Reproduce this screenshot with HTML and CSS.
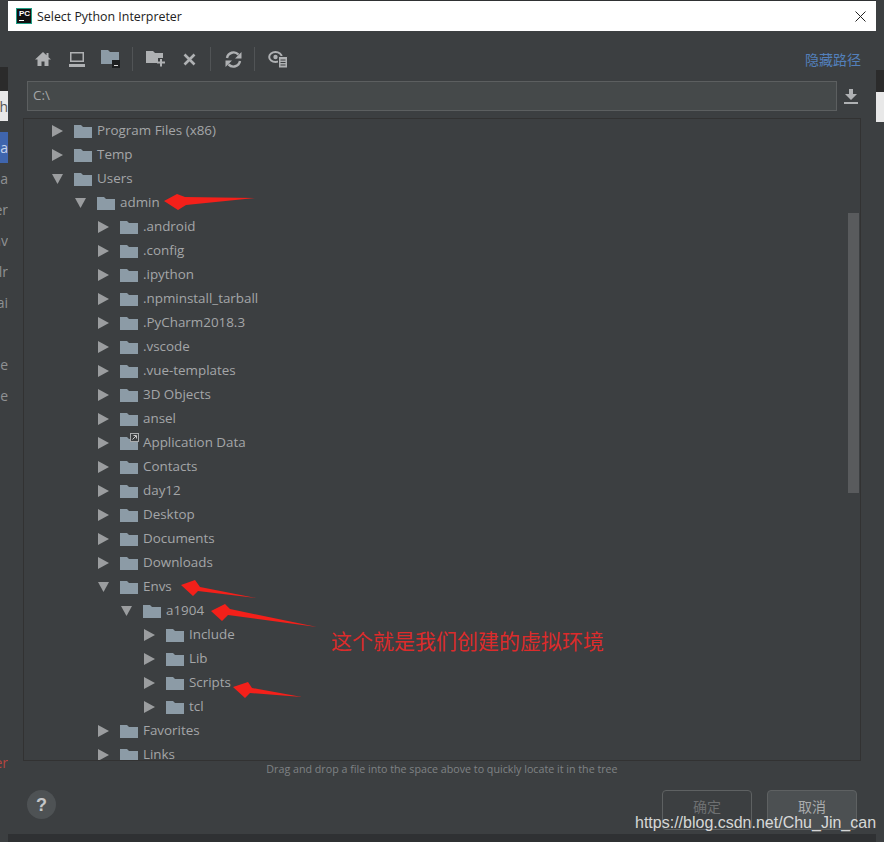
FILE: index.html
```html
<!DOCTYPE html>
<html lang="zh">
<head>
    <meta charset="UTF-8">
    <meta name="viewport" content="width=device-width, initial-scale=1.0">
    <title>Select Python Interpreter</title>
    <link rel="stylesheet" href="styles.css">
</head>
<body>

    <svg class="defs" width="0" height="0">
        <symbol id="arrow-right" viewBox="0 0 11 12"><path d="M0 0 L11 6 L0 12 Z"/></symbol>
        <symbol id="arrow-down" viewBox="0 0 11 12"><path d="M0 1 H11 L5.5 11 Z"/></symbol>
        <symbol id="folder" viewBox="0 0 18 14"><path d="M0 1 H7 L9 3 H18 V14 H0 Z"/></symbol>
    </svg>

    <!-- ventana de atras, solo se ve un trozo -->
    <div class="strip strip-left">
        <div class="s-dark" style="height:67px"></div>
        <div class="s-black" style="height:24px"></div>
        <div class="s-white"><span>h</span></div>
        <div class="s-blue"><span>a</span></div>
        <div class="s-row"><span>da</span></div>
        <div class="s-row"><span>er</span></div>
        <div class="s-row"><span>nv</span></div>
        <div class="s-row"><span>lr</span></div>
        <div class="s-row"><span>ai</span></div>
        <div class="s-row"></div>
        <div class="s-row"><span>xe</span></div>
        <div class="s-row"><span>xe</span></div>
        <div class="s-fill"></div>
        <div class="s-row s-red"><span>er</span></div>
        <div class="s-dark" style="height:64px"></div>
    </div>

    <div class="dialog">
        <div class="titlebar">
            <div class="pc-logo"><span>PC</span><i></i></div>
            <div class="title">Select Python Interpreter</div>
            <svg class="close" width="11" height="11" viewBox="0 0 11 11"><path d="M0.5 0.5 L10.5 10.5 M10.5 0.5 L0.5 10.5" stroke="#222" fill="none"/></svg>
        </div>

        <div class="toolbar">
            <div class="tool"><svg width="18" height="16" viewBox="0 0 18 16"><path d="M9 1 L1 8.5 H3.5 V15 H7.5 V10.5 H10.5 V15 H14.5 V8.5 H17 L14.5 6.2 V2 H12.5 V4.3 Z"/></svg></div>
            <div class="tool"><svg width="16" height="15" viewBox="0 0 16 15"><path fill-rule="evenodd" d="M1 0 H15 V10 H1 Z M2.500 1.500 V8.500 H13.500 V1.500 Z M0 12 H16 V15 H0 Z"/></svg></div>
            <div class="tool"><svg width="20" height="18" viewBox="0 0 20 18"><path class="blue-f" d="M0 0 H7 L9 2 H18 V14 H0 Z"/><rect x="11" y="10" width="8" height="8" fill="#1d1f20"/><rect x="13" y="15" width="4" height="1" fill="#ddd"/></svg></div>
            <div class="sep sep1"></div>
            <div class="tool"><svg width="20" height="16" viewBox="0 0 20 16"><path d="M0 0 H7 L9 2 H17 V7 H12 V12 H0 Z"/><path d="M14 8 H16 V10.500 H19 V12.500 H16 V15.500 H14 V12.500 H11 V10.500 H14 Z"/></svg></div>
            <div class="tool tool-x"><svg width="13" height="13" viewBox="0 0 13 13"><path d="M1.500 1.500 L11.500 11.500 M11.500 1.500 L1.500 11.500" stroke="#afb1b3" stroke-width="2.600" fill="none"/></svg></div>
            <div class="sep sep2"></div>
            <div class="tool"><svg width="17" height="17" viewBox="0 0 17 17"><path d="M2 7 A6.700 6.700 0 0 1 13.500 3.600" stroke="#afb1b3" stroke-width="2.400" fill="none"/><path d="M15 10 A6.700 6.700 0 0 1 3.500 13.400" stroke="#afb1b3" stroke-width="2.400" fill="none"/><path d="M16.500 1 V7.500 H10 Z M0.500 16 V9.500 H7 Z"/></svg></div>
            <div class="sep sep3"></div>
            <div class="tool"><svg width="20" height="19" viewBox="0 0 20 19"><ellipse cx="7.500" cy="7" rx="6.300" ry="5" fill="none" stroke="#afb1b3" stroke-width="2"/><circle cx="7.500" cy="7" r="2.200"/><path d="M10.500 6.500 H19.500 V18 H10.500 Z" stroke="#3c3f41"/><path d="M12.500 10 H17.500 M12.500 12.500 H17.500 M12.500 15 H17.500" stroke="#3c3f41" fill="none"/></svg></div>
            <a class="hide-path">隐藏路径</a>
        </div>

        <div class="path-row">
            <div class="path-input">C:\</div>
            <svg class="download" width="16" height="15" viewBox="0 0 16 15"><path d="M6 0 H10 V5 H14 L8 11 L2 5 H6 Z M1 13 H15 V15 H1 Z"/></svg>
        </div>

        <div class="tree">
            <div class="row lv0"><svg class="arr"><use href="#arrow-right"/></svg><svg class="fld"><use href="#folder"/></svg><span>Program Files (x86)</span></div>
            <div class="row lv0"><svg class="arr"><use href="#arrow-right"/></svg><svg class="fld"><use href="#folder"/></svg><span>Temp</span></div>
            <div class="row lv0"><svg class="arr"><use href="#arrow-down"/></svg><svg class="fld"><use href="#folder"/></svg><span>Users</span></div>
            <div class="row lv1"><svg class="arr"><use href="#arrow-down"/></svg><svg class="fld"><use href="#folder"/></svg><span>admin</span></div>
            <div class="row lv2"><svg class="arr"><use href="#arrow-right"/></svg><svg class="fld"><use href="#folder"/></svg><span>.android</span></div>
            <div class="row lv2"><svg class="arr"><use href="#arrow-right"/></svg><svg class="fld"><use href="#folder"/></svg><span>.config</span></div>
            <div class="row lv2"><svg class="arr"><use href="#arrow-right"/></svg><svg class="fld"><use href="#folder"/></svg><span>.ipython</span></div>
            <div class="row lv2"><svg class="arr"><use href="#arrow-right"/></svg><svg class="fld"><use href="#folder"/></svg><span>.npminstall_tarball</span></div>
            <div class="row lv2"><svg class="arr"><use href="#arrow-right"/></svg><svg class="fld"><use href="#folder"/></svg><span>.PyCharm2018.3</span></div>
            <div class="row lv2"><svg class="arr"><use href="#arrow-right"/></svg><svg class="fld"><use href="#folder"/></svg><span>.vscode</span></div>
            <div class="row lv2"><svg class="arr"><use href="#arrow-right"/></svg><svg class="fld"><use href="#folder"/></svg><span>.vue-templates</span></div>
            <div class="row lv2"><svg class="arr"><use href="#arrow-right"/></svg><svg class="fld"><use href="#folder"/></svg><span>3D Objects</span></div>
            <div class="row lv2"><svg class="arr"><use href="#arrow-right"/></svg><svg class="fld"><use href="#folder"/></svg><span>ansel</span></div>
            <div class="row lv2"><svg class="arr"><use href="#arrow-right"/></svg><div class="fld-wrap"><svg class="fld"><use href="#folder"/></svg><svg class="link-badge" width="9" height="9" viewBox="0 0 9 9"><rect width="9" height="9" fill="#3c3f41"/><rect x="0.500" y="0.500" width="8" height="8" fill="none" stroke="#a9abad"/><path d="M2.500 6.500 L6 3 M3.500 2.500 H6.500 V5.500" stroke="#c8c8c8" fill="none"/></svg></div><span>Application Data</span></div>
            <div class="row lv2"><svg class="arr"><use href="#arrow-right"/></svg><svg class="fld"><use href="#folder"/></svg><span>Contacts</span></div>
            <div class="row lv2"><svg class="arr"><use href="#arrow-right"/></svg><svg class="fld"><use href="#folder"/></svg><span>day12</span></div>
            <div class="row lv2"><svg class="arr"><use href="#arrow-right"/></svg><svg class="fld"><use href="#folder"/></svg><span>Desktop</span></div>
            <div class="row lv2"><svg class="arr"><use href="#arrow-right"/></svg><svg class="fld"><use href="#folder"/></svg><span>Documents</span></div>
            <div class="row lv2"><svg class="arr"><use href="#arrow-right"/></svg><svg class="fld"><use href="#folder"/></svg><span>Downloads</span></div>
            <div class="row lv2"><svg class="arr"><use href="#arrow-down"/></svg><svg class="fld"><use href="#folder"/></svg><span>Envs</span></div>
            <div class="row lv3"><svg class="arr"><use href="#arrow-down"/></svg><svg class="fld"><use href="#folder"/></svg><span>a1904</span></div>
            <div class="row lv4"><svg class="arr"><use href="#arrow-right"/></svg><svg class="fld"><use href="#folder"/></svg><span>Include</span></div>
            <div class="row lv4"><svg class="arr"><use href="#arrow-right"/></svg><svg class="fld"><use href="#folder"/></svg><span>Lib</span></div>
            <div class="row lv4"><svg class="arr"><use href="#arrow-right"/></svg><svg class="fld"><use href="#folder"/></svg><span>Scripts</span></div>
            <div class="row lv4"><svg class="arr"><use href="#arrow-right"/></svg><svg class="fld"><use href="#folder"/></svg><span>tcl</span></div>
            <div class="row lv2"><svg class="arr"><use href="#arrow-right"/></svg><svg class="fld"><use href="#folder"/></svg><span>Favorites</span></div>
            <div class="row lv2"><svg class="arr"><use href="#arrow-right"/></svg><svg class="fld"><use href="#folder"/></svg><span>Links</span></div>
            <div class="scroll-thumb"></div>
        </div>

        <div class="hint">Drag and drop a file into the space above to quickly locate it in the tree</div>

        <div class="footer">
            <div class="help">?</div>
            <div class="btn btn-off">确定</div>
            <div class="btn">取消</div>
        </div>
    </div>

    <div class="strip strip-right">
        <div class="s-dark" style="height:70px"></div>
        <div class="s-black" style="height:22px"></div>
        <div class="s-white"></div>
        <div class="s-fill"></div>
    </div>

    <!-- anotaciones pintadas encima de la captura -->
    <svg class="marks" width="884" height="842" viewBox="0 0 884 842">
        <path d="M164 201 L177 194 L185 197 L255 198 L186 205 L178 210 Z"/>
        <path d="M181 585 L195 580 L200 587 L256 598 L198 591 L193 596 Z"/>
        <path d="M211 611 L225 604 L230 609 L317 627 L228 615 L222 621 Z"/>
        <path d="M233 687 L248 682 L252 688 L302 697 L250 693 L245 698 Z"/>
    </svg>
    <div class="note">这个就是我们创建的虚拟环境</div>
    <div class="watermark">https://blog.csdn.net/Chu_Jin_can</div>

</body>
</html>
```

FILE: styles.css
```css
/* Global */
body {
    font-family: 'Open Sans', sans-serif;
    margin: 0;
    padding: 0;
    width: 884px;
    height: 842px;
    overflow: hidden;
    background-color: #2f3133;
    display: flex;
    position: relative;
}

.defs {
    position: absolute;
}

/* Ventana de atras */
.strip {
    width: 8px;
    height: 842px;
    flex: none;
    display: flex;
    flex-direction: column;
    overflow: hidden;
    background-color: #3c3f41;
    font-size: 14px;
    color: #8f9193;
}

.strip > div {
    display: flex;
    justify-content: flex-end;
    align-items: center;
    white-space: nowrap;
    flex: none;
}

.s-dark {
    background-color: #3c3f41;
}

.s-black {
    background-color: #2b2b2b;
}

.s-white {
    height: 30px;
    background-color: #e8e8e8;
    color: #555;
    margin-bottom: 11px;
}

.s-blue {
    height: 31px;
    background-color: #3f65ad;
    color: #c5d2ea;
}

.s-row {
    height: 31px;
}

.strip > .s-fill {
    flex: 1;
}

.s-red {
    color: #b5453f;
}

/* Dialogo */
.dialog {
    width: 868px;
    height: 833px;
    margin-top: 1px;
    flex: none;
    background-color: #3c3f41;
    display: flex;
    flex-direction: column;
}

.titlebar {
    height: 30px;
    background-color: #fff;
    display: flex;
    align-items: center;
    padding-left: 8px;
    flex: none;
}

.pc-logo {
    width: 16px;
    height: 16px;
    background-color: #111;
    border: 1px solid #1f9e85;
    box-sizing: border-box;
    color: #fff;
    font-family: 'Liberation Sans', sans-serif;
    font-size: 8px;
    font-weight: bold;
    line-height: 9px;
    padding-left: 2px;
}

.pc-logo span {
    display: block;
}

.pc-logo i {
    display: block;
    width: 5px;
    height: 1px;
    margin-top: 2px;
    background-color: #fff;
}

.title {
    font-size: 12.4px;
    color: #222;
    margin-left: 5px;
}

.close {
    margin-left: auto;
    margin-right: 10px;
}

/* Barra de herramientas */
.toolbar {
    height: 50px;
    display: flex;
    align-items: center;
    padding: 6px 15px 0 18px;
    box-sizing: border-box;
    flex: none;
}

.tool {
    width: 34px;
    display: flex;
    justify-content: center;
    align-items: center;
}

.tool svg {
    fill: #afb1b3;
}

.tool .blue-f {
    fill: #8c9ba6;
}

.tool-x svg {
    margin-right: 2px;
}

.sep {
    width: 1px;
    height: 24px;
    background-color: #515456;
}

.sep1 {
    margin: 0 6px 0 4px;
}

.sep2 {
    margin: 0 5px 0 3px;
}

.sep3 {
    margin: 0 6px 0 4px;
}

.hide-path {
    margin-left: auto;
    color: #5380bb;
    font-family: 'Noto Sans CJK SC', sans-serif;
    font-size: 14px;
}

/* Ruta */
.path-row {
    height: 30px;
    display: flex;
    align-items: center;
    padding-left: 19px;
    flex: none;
}

.path-input {
    width: 810px;
    height: 30px;
    box-sizing: border-box;
    background-color: #45494a;
    border: 1px solid #5c5f60;
    color: #a4a6a8;
    font-size: 13.4px;
    line-height: 27px;
    padding-left: 5px;
}

.download {
    margin-left: 6px;
    fill: #afb1b3;
}

/* Arbol */
.tree {
    height: 643px;
    margin: 7px 15px 0;
    box-sizing: border-box;
    border: 1px solid #323232;
    overflow: hidden;
    position: relative;
    flex: none;
}

.row {
    height: 24px;
    display: flex;
    align-items: center;
    color: #a4a6a8;
    font-size: 13.4px;
    white-space: nowrap;
}

.row span {
    margin-bottom: 2px;
}

.lv0 { padding-left: 28px; }
.lv1 { padding-left: 51px; }
.lv2 { padding-left: 74px; }
.lv3 { padding-left: 97px; }
.lv4 { padding-left: 120px; }

.arr {
    width: 11px;
    height: 12px;
    margin-right: 11px;
    fill: #9b9d9f;
    flex: none;
}

.fld {
    width: 18px;
    height: 14px;
    margin-right: 5px;
    fill: #8c9ba6;
    display: block;
    flex: none;
}

.fld-wrap {
    position: relative;
}

.link-badge {
    position: absolute;
    left: 10px;
    top: -3px;
}

.scroll-thumb {
    position: absolute;
    left: 824px;
    top: 94px;
    width: 11px;
    height: 280px;
    background-color: #595b5d;
}

.hint {
    height: 17px;
    line-height: 17px;
    text-align: center;
    color: #7f8284;
    font-size: 10.7px;
    flex: none;
}

/* Botones */
.footer {
    display: flex;
    align-items: flex-start;
    padding: 12px 19px 0 19px;
}

.help {
    width: 29px;
    height: 29px;
    border-radius: 50%;
    background-color: #4e5254;
    color: #c4c6c8;
    font-family: 'Liberation Sans', sans-serif;
    font-size: 18px;
    font-weight: bold;
    line-height: 31px;
    text-align: center;
    margin-right: auto;
}

.btn {
    width: 90px;
    height: 40px;
    box-sizing: border-box;
    background-color: #4c5052;
    border: 1px solid #5e6162;
    border-radius: 4px;
    color: #a9abad;
    font-family: 'Noto Sans CJK SC', sans-serif;
    font-size: 14px;
    line-height: 30px;
    text-align: center;
    margin-left: 15px;
}

.btn-off {
    background-color: #3c3f41;
    color: #6e7072;
}

/* Anotaciones */
.marks {
    position: absolute;
    left: 0;
    top: 0;
    fill: #f4201a;
    pointer-events: none;
}

.note {
    position: absolute;
    left: 331px;
    top: 625px;
    color: #dc2b2b;
    font-family: 'Noto Sans CJK SC', sans-serif;
    font-size: 21px;
    line-height: 30px;
    white-space: nowrap;
}

.watermark {
    position: absolute;
    left: 635px;
    top: 813px;
    color: rgba(255, 255, 255, 0.8);
    font-family: 'Liberation Sans', sans-serif;
    font-size: 16px;
    line-height: 20px;
    white-space: nowrap;
}
```
